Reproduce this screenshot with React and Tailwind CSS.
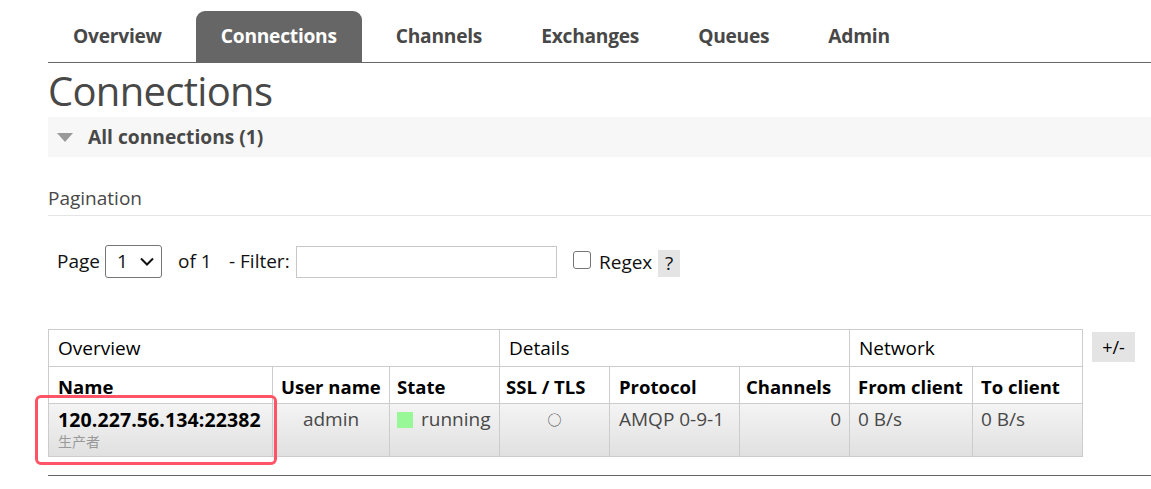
import React from "react";

const tabs = ["Overview", "Connections", "Channels", "Exchanges", "Queues", "Admin"];

export default function App() {
  return (
    <div
      className="w-[1151px] h-[489px] overflow-hidden bg-white text-[#484848]"
      style={{ fontFamily: '"Open Sans", "Noto Sans", "Noto Sans CJK SC", sans-serif' }}
    >
      <div className="ml-[48px]">
        {/* Nav */}
        <div className="flex items-end h-[63px] pt-[11px] border-b border-[#666]">
          {tabs.map((t) => (
            <div
              key={t}
              className={
                "h-[51px] px-[25px] mr-[9px] flex items-center font-bold text-[19.2px] tracking-[-0.25px] rounded-t-[9px] " +
                (t === "Connections" ? "bg-[#666] text-white" : "text-[#484848]")
              }
            >
              {t}
            </div>
          ))}
        </div>

        {/* Heading */}
        <h1 className="h-[54px] text-[40px] leading-[56px] tracking-[-0.7px] text-[#484848]">Connections</h1>

        {/* Section header */}
        <div className="h-[40px] bg-[#f7f7f7] flex items-center pl-[9px]">
          <svg width="16" height="9" viewBox="0 0 16 9" className="mr-[15px]">
            <polygon points="0,0 16,0 8,9" fill="#999" />
          </svg>
          <span className="font-bold text-[19.2px] text-[#484848]">All connections (1)</span>
        </div>

        {/* Pagination */}
        <div className="mt-[28px] border-b border-[#e4e4e4] pb-[2px] leading-[27px]">
          <span className="text-[19px] text-[#484848]">Pagination</span>
        </div>

        <div className="flex items-center h-[33px] mt-[29px] pl-[9px] text-[19px] text-[#111]">
          <span className="mr-[5px]">Page</span>
          <div className="w-[57px] h-[33px] border border-[#767676] rounded-[3px] flex items-center pl-[11px] pr-[7px] justify-between">
            <span>1</span>
            <svg width="14" height="9" viewBox="0 0 14 9">
              <polyline points="1,1.5 7,7.5 13,1.5" fill="none" stroke="#111" strokeWidth="2" />
            </svg>
          </div>
          <span className="ml-[16px] w-[35px]">of 1</span>
          <span className="ml-[16px] w-[62px] whitespace-nowrap">- Filter:</span>
          <div className="ml-[5px] w-[261px] h-[32px] border border-[#c8c8c8]" />
          <div className="ml-[16px] w-[18px] h-[18px] border border-[#767676] rounded-[3px] mb-[4px]" />
          <span className="ml-[8px] mt-[2px] w-[54px]">Regex</span>
          <span className="ml-[5px] mt-[4px] w-[22px] h-[27px] bg-[#e4e4e4] flex items-center justify-center">?</span>
        </div>

        {/* Table */}
        <div className="relative mt-[51px] flex items-start">
          <table className="border-collapse text-[19px] text-black">
            <thead>
              <tr className="h-[37px]">
                <td colSpan={3} className="border border-[#ccc] px-[9px]">Overview</td>
                <td colSpan={3} className="border border-[#ccc] px-[9px]">Details</td>
                <td colSpan={2} className="border border-[#ccc] px-[9px]">Network</td>
              </tr>
              <tr className="h-[37px] text-[18.5px] whitespace-nowrap">
                <th className="border border-[#ccc] px-[9px] w-[224px] min-w-[224px] font-bold text-left pt-[4px]">Name</th>
                <th className="border border-[#ccc] px-[8px] w-[117px] font-bold text-left pt-[4px]">User name</th>
                <th className="border border-[#ccc] px-[7px] w-[110px] font-bold text-left pt-[4px]">State</th>
                <th className="border border-[#ccc] px-[6px] w-[110px] font-bold text-left pt-[4px]">SSL / TLS</th>
                <th className="border border-[#ccc] px-[9px] w-[130px] font-bold text-left pt-[4px]">Protocol</th>
                <th className="border border-[#ccc] px-[6px] w-[110px] font-bold text-left pt-[4px]">Channels</th>
                <th className="border border-[#ccc] px-[8px] w-[123px] font-bold text-left pt-[4px]">From client</th>
                <th className="border border-[#ccc] px-[8px] w-[110px] font-bold text-left pt-[4px]">To client</th>
              </tr>
            </thead>
            <tbody>
              <tr className="h-[53px] bg-gradient-to-b from-[#f4f4f4] to-[#e0e0e0] text-[#484848] align-top whitespace-nowrap">
                <td className="border border-[#ccc] px-[9px] pt-[2px]">
                  <div className="font-bold text-black text-[19.5px] leading-[27px] tracking-[0.1px]">120.227.56.134:22382</div>
                  <div className="text-[14px] text-[#999] leading-[17px]">生产者</div>
                </td>
                <td className="border border-[#ccc] px-[8px] pt-[2px] text-center leading-[27px]">admin</td>
                <td className="border border-[#ccc] px-[7px] pt-[2px] leading-[27px]">
                  <span className="inline-flex items-center">
                    <span className="w-[16px] h-[16px] bg-[#98f898] mr-[8px]" />
                    running
                  </span>
                </td>
                <td className="border border-[#ccc] px-[6px] pt-[2px] text-center leading-[27px] text-[14px]">○</td>
                <td className="border border-[#ccc] px-[9px] pt-[2px] leading-[27px]">AMQP 0-9-1</td>
                <td className="border border-[#ccc] px-[8px] pt-[2px] text-right leading-[27px]">0</td>
                <td className="border border-[#ccc] px-[8px] pt-[2px] leading-[27px]">0 B/s</td>
                <td className="border border-[#ccc] px-[8px] pt-[2px] leading-[27px]">0 B/s</td>
              </tr>
            </tbody>
          </table>
          <div className="ml-[9px] mt-[3px] w-[43px] h-[30px] bg-[#e4e4e4] flex items-center justify-center text-[18px] text-black">
            +/-
          </div>
          <div className="absolute left-[-13px] top-[66px] w-[242px] h-[70px] border-[3px] border-[#ff5468] rounded-[6px] pointer-events-none" />
        </div>

        <div className="mt-[18px] border-b border-[#666]" />
      </div>
    </div>
  );
}
